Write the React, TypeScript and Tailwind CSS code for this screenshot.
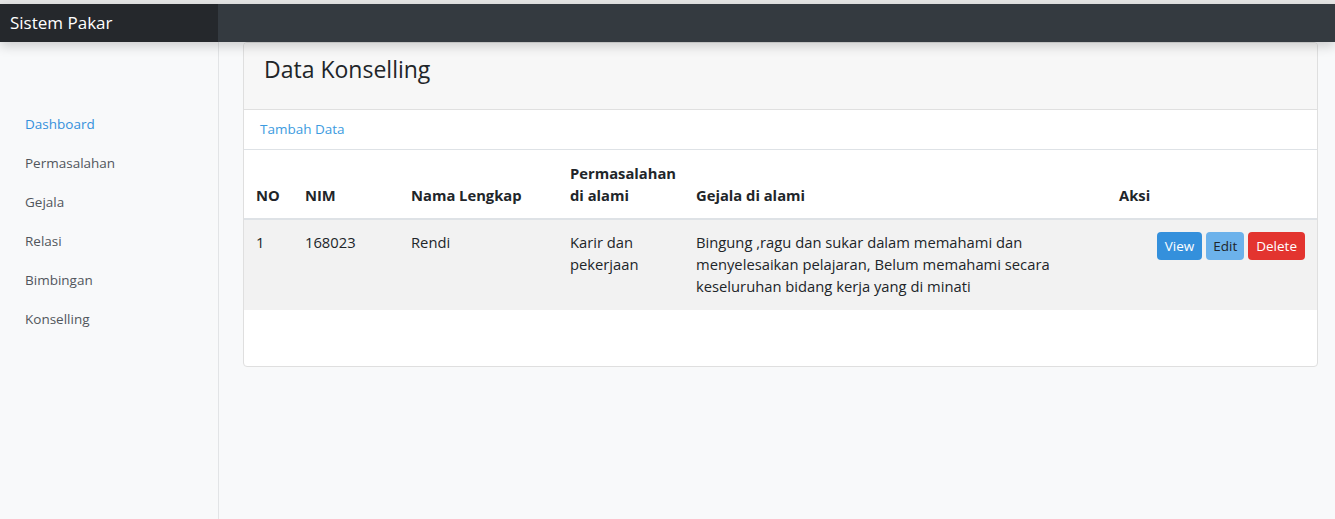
import React from 'react';

const menu = ['Dashboard', 'Permasalahan', 'Gejala', 'Relasi', 'Bimbingan', 'Konselling'];

export default function App() {
  return (
    <div className="min-h-screen w-full bg-[#f8f9fa] font-['Open_Sans',sans-serif] text-[#212529]">
      <div className="h-[4px] bg-[#e6e6e6]" />

      {/* Navbar */}
      <div className="relative z-10 flex h-[38px] bg-[#343a40] shadow-[0_4px_12px_rgba(0,0,0,0.18)]">
        <div className="flex w-[218px] items-center bg-[#25282c] px-[10px] pb-[1px] text-[17px] text-white">
          Sistem Pakar
        </div>
      </div>

      <div className="flex">
        {/* Sidebar */}
        <aside className="min-h-[477px] w-[219px] shrink-0 border-r border-[#e2e4e6] bg-[#f8f9fa] pt-[63px]">
          {menu.map((item, i) => (
            <a
              key={item}
              href="#"
              className={`flex h-[39px] items-center px-[25px] text-[13.5px] ${i === 0 ? 'text-[#3490dc]' : 'text-[#51565c]'}`}
            >
              {item}
            </a>
          ))}
        </aside>

        {/* Main */}
        <main className="flex-1 pl-[24px] pr-[17px]">
          <div className="overflow-hidden rounded-[4px] border border-[#dfdfdf] bg-white">
            <div className="h-[67px] border-b border-[#e0e0e0] bg-[#f7f7f7] px-[20px] pt-[11px]">
              <h3 className="text-[23px] leading-[30px]">Data Konselling</h3>
            </div>
            <div className="flex h-[39px] items-center px-[16px] pb-[1px]">
              <a href="#" className="text-[13.5px] text-[#3d9be0]">Tambah Data</a>
            </div>
            <table className="w-full table-fixed border-t border-[#dee2e6] text-[14.75px] leading-[22px]">
              <thead>
                <tr className="border-b-2 border-[#dee2e6] text-left font-semibold">
                  <th className="w-[49px] px-[12px] pt-[12px] pb-[12px] align-bottom">NO</th>
                  <th className="w-[106px] px-[12px] pt-[12px] pb-[12px] align-bottom">NIM</th>
                  <th className="w-[159px] px-[12px] pt-[12px] pb-[12px] align-bottom">Nama Lengkap</th>
                  <th className="w-[126px] px-[12px] pt-[12px] pb-[12px] align-bottom">Permasalahan<br />di alami</th>
                  <th className="w-[423px] px-[12px] pt-[12px] pb-[12px] align-bottom">Gejala di alami</th>
                  <th className="px-[12px] pt-[12px] pb-[12px] align-bottom">Aksi</th>
                </tr>
              </thead>
              <tbody>
                <tr className="bg-[#f2f2f2]">
                  <td className="px-[12px] pt-[11px] pb-[13px] align-top">1</td>
                  <td className="px-[12px] pt-[11px] pb-[13px] align-top">168023</td>
                  <td className="px-[12px] pt-[11px] pb-[13px] align-top">Rendi</td>
                  <td className="px-[12px] pt-[11px] pb-[13px] align-top">Karir dan<br />pekerjaan</td>
                  <td className="px-[12px] pt-[11px] pb-[13px] align-top">
                    Bingung ,ragu dan sukar dalam memahami dan<br />
                    menyelesaikan pelajaran, Belum memahami secara<br />
                    keseluruhan bidang kerja yang di minati
                  </td>
                  <td className="px-[12px] pt-[11px] pb-[13px] align-top">
                    <div className="flex justify-end gap-[4px] pt-[1px] text-[13.5px]">
                      <button className="h-[28px] rounded-[4px] bg-[#3490dc] px-[8px] pb-[1px] text-white">View</button>
                      <button className="h-[28px] rounded-[4px] bg-[#6cb2eb] px-[7px] pb-[1px] text-[#212529]">Edit</button>
                      <button className="h-[28px] rounded-[4px] bg-[#e3342f] px-[8px] pb-[1px] text-white">Delete</button>
                    </div>
                  </td>
                </tr>
              </tbody>
            </table>
            <div className="h-[56px]" />
          </div>
        </main>
      </div>
    </div>
  );
}
